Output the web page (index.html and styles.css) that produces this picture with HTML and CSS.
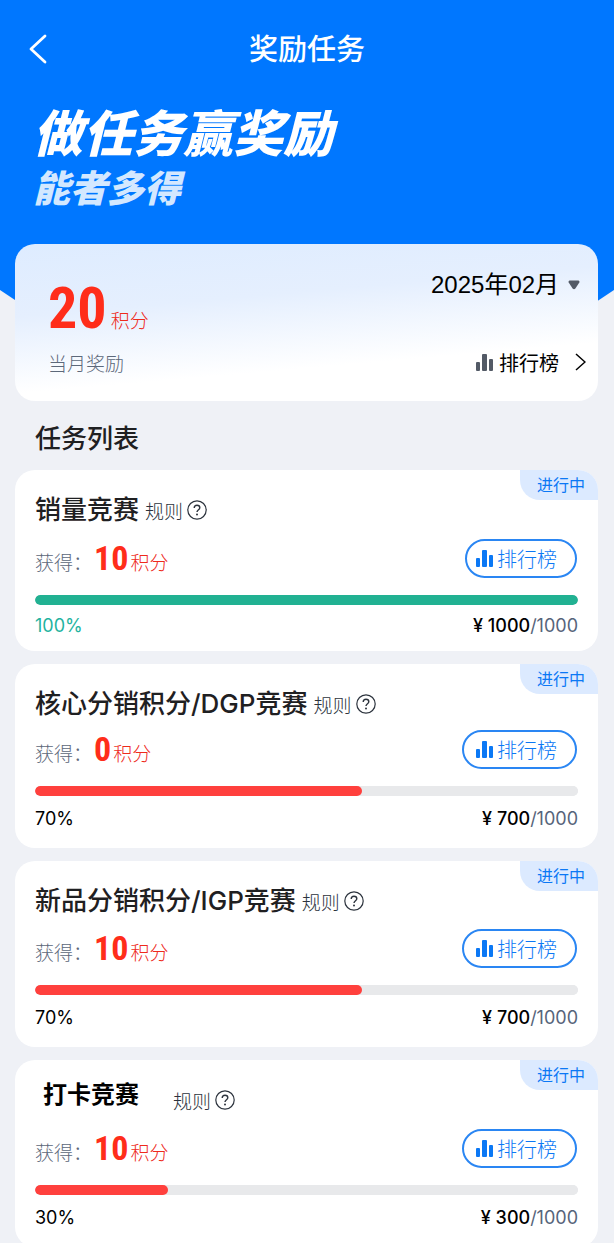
FILE: index.html
```html
<!DOCTYPE html>
<html lang="zh-CN">
<head>
<meta charset="utf-8">
<meta name="viewport" content="width=device-width, initial-scale=1">
<title>奖励任务</title>
<link rel="stylesheet" href="styles.css">
</head>
<body>
<svg class="defs" aria-hidden="true">
  <symbol id="bars" viewBox="0 0 18 17">
    <rect x="0" y="8" width="4" height="9" rx="1"/>
    <rect x="6" y="0" width="5" height="17" rx="1"/>
    <rect x="13" y="5" width="4" height="12" rx="1"/>
  </symbol>
  <symbol id="help" viewBox="0 0 20 20">
    <circle cx="10" cy="10" r="9.2" fill="none" stroke="currentColor" stroke-width="1.2"/>
    <path d="M7.2 8.1C7.2 6.3 8.4 5.2 10 5.2S12.8 6.3 12.8 7.8C12.8 9.7 10 9.8 10 12" fill="none" stroke="currentColor" stroke-width="1.4"/>
    <circle cx="10" cy="14.4" r="1"/>
  </symbol>
</svg>
<div class="page">
  <header class="hero">
    <div class="navbar">
      <button class="back" type="button" aria-label="返回">
        <svg width="18" height="30" viewBox="0 0 18 30"><path d="M16 2L2 15L16 28" fill="none" stroke="currentColor" stroke-width="2.8" stroke-linecap="round" stroke-linejoin="round"/></svg>
      </button>
      <h1 class="nav-title">奖励任务</h1>
    </div>
    <p class="slogan">做任务赢奖励</p>
    <p class="subslogan">能者多得</p>
  </header>
  <main class="content">
    <section class="summary">
      <div class="summary-row">
        <p class="total"><span class="total-num">20</span><span class="unit">积分</span></p>
        <label class="month">
          <select class="month-select" aria-label="月份"><option>2025年02月</option></select>
          <svg width="12" height="10" viewBox="0 0 12 10"><path d="M1.5 .5H10.5Q12 .8 11.3 2.5L7.4 8.4Q6 10 4.6 8.4L.7 2.5Q0 .8 1.5 .5Z"/></svg>
        </label>
      </div>
      <div class="summary-row summary-foot">
        <span class="muted">当月奖励</span>
        <a class="rank-link" href="#rank"><svg class="bars" width="18" height="17"><use href="#bars"/></svg>排行榜<svg class="chevron" width="11" height="18" viewBox="0 0 11 18"><path d="M1 1L10 9L1 17" fill="none" stroke="currentColor" stroke-width="1.5"/></svg></a>
      </div>
    </section>
    <h2 class="list-title">任务列表</h2>

    <article class="task task-done">
      <span class="status">进行中</span>
      <div class="task-head"><h3 class="task-title">销量竞赛</h3><button class="rule" type="button">规则<svg width="20" height="20"><use href="#help"/></svg></button></div>
      <div class="reward"><span class="muted">获得：</span><span class="num">10</span><span class="unit">积分</span><button class="rank" type="button"><svg class="bars" width="18" height="17"><use href="#bars"/></svg>排行榜</button></div>
      <progress class="bar" max="1000" value="1000" aria-label="销量竞赛"></progress>
      <div class="figures"><span class="percent">100%</span><span class="amount"><span class="now">¥ 1000</span>/1000</span></div>
    </article>

    <article class="task task-tight">
      <span class="status">进行中</span>
      <div class="task-head"><h3 class="task-title">核心分销积分/DGP竞赛</h3><button class="rule" type="button">规则<svg width="20" height="20"><use href="#help"/></svg></button></div>
      <div class="reward"><span class="muted">获得：</span><span class="num">0</span><span class="unit">积分</span><button class="rank" type="button"><svg class="bars" width="18" height="17"><use href="#bars"/></svg>排行榜</button></div>
      <progress class="bar" max="1000" value="602" aria-label="核心分销积分/DGP竞赛"></progress>
      <div class="figures"><span class="percent">70%</span><span class="amount"><span class="now">¥ 700</span>/1000</span></div>
    </article>

    <article class="task">
      <span class="status">进行中</span>
      <div class="task-head"><h3 class="task-title">新品分销积分/IGP竞赛</h3><button class="rule" type="button">规则<svg width="20" height="20"><use href="#help"/></svg></button></div>
      <div class="reward"><span class="muted">获得：</span><span class="num">10</span><span class="unit">积分</span><button class="rank" type="button"><svg class="bars" width="18" height="17"><use href="#bars"/></svg>排行榜</button></div>
      <progress class="bar" max="1000" value="602" aria-label="新品分销积分/IGP竞赛"></progress>
      <div class="figures"><span class="percent">70%</span><span class="amount"><span class="now">¥ 700</span>/1000</span></div>
    </article>

    <article class="task task-checkin">
      <span class="status">进行中</span>
      <div class="task-head"><h3 class="task-title">打卡竞赛</h3><button class="rule" type="button">规则<svg width="20" height="20"><use href="#help"/></svg></button></div>
      <div class="reward"><span class="muted">获得：</span><span class="num">10</span><span class="unit">积分</span><button class="rank" type="button"><svg class="bars" width="18" height="17"><use href="#bars"/></svg>排行榜</button></div>
      <progress class="bar" max="1000" value="245" aria-label="打卡竞赛"></progress>
      <div class="figures"><span class="percent">30%</span><span class="amount"><span class="now">¥ 300</span>/1000</span></div>
    </article>
  </main>
</div>
</body>
</html>
```
FILE: styles.css
```css
* { box-sizing: border-box; }
body {
  margin: 0;
  background: #eff1f6;
  color: #000;
  font-family: Inter, "Noto Sans CJK SC", sans-serif;
}
h1, h2, h3, p { margin: 0; }
button, select {
  margin: 0;
  padding: 0;
  border: 0;
  background: none;
  color: inherit;
  font: inherit;
}
svg { display: block; flex: none; fill: currentColor; }
.defs { position: absolute; width: 0; height: 0; }
.page { height: 100vh; overflow-y: auto; scrollbar-width: none; }

.hero {
  padding: 24px 33px 110px;
  background: #0077ff;
  color: #fff;
  clip-path: polygon(0 0, 100% 0, 100% 290px, calc(100% - 30px) 310px, 30px 310px, 0 290px);
}
.navbar {
  display: grid;
  grid-template-columns: 1fr auto 1fr;
  align-items: center;
  height: 50px;
  margin-left: -4px;
  margin-right: -4px;
}
.back { justify-self: start; }
.nav-title { padding-top: 2px; font-size: 29px; line-height: 48px; font-weight: 500; }
.slogan {
  margin-top: 30px;
  font-size: 50px;
  line-height: 60px;
  font-weight: 900;
  font-style: italic;
}
.subslogan {
  font-size: 37px;
  line-height: 50px;
  font-weight: 900;
  font-style: italic;
  color: #d3e8ff;
}

.content { position: relative; margin-top: -80px; padding: 0 16px 0 15px; }
.summary {
  padding: 20px 12px 21px 33px;
  border-radius: 20px;
  background: linear-gradient(175deg, #deecff 0%, #e5effe 35%, #fff 72%);
}
.summary-row { display: flex; justify-content: space-between; }
.total { display: flex; align-items: baseline; gap: 4px; height: 80px; line-height: 88px; }
.total-num, .num {
  font-family: "Roboto Condensed", "Liberation Sans Narrow", "Liberation Sans", sans-serif;
  font-weight: 700;
  color: #ff2d1a;
}
.total-num { font-size: 58px; }
.unit { font-size: 19px; font-weight: 300; color: #ee2a1c; }
.muted { font-size: 19px; font-weight: 300; color: #5c687a; }
.month { display: flex; align-items: center; gap: 8px; height: 42px; padding-right: 6px; color: #535a66; }
.month-select {
  appearance: none;
  font-family: "Liberation Sans", "Noto Sans CJK SC", sans-serif;
  font-size: 24px;
  line-height: 32px;
  color: #000;
}
.summary-foot { align-items: center; height: 36px; }
.rank-link {
  display: flex;
  align-items: center;
  font-size: 20px;
  color: #000;
  text-decoration: none;
}
.rank-link .bars { margin-right: 5px; color: #535a66; }
.chevron { margin-left: 16px; }

.list-title { padding: 20px 20px 13px; font-size: 26px; line-height: 36px; font-weight: 500; color: #1f2022; }

.task {
  position: relative;
  margin-bottom: 13px;
  padding: 23px 20px 17px;
  border-radius: 20px;
  background: #fff;
}
.status {
  position: absolute;
  top: 0;
  right: 0;
  padding: 0 13px 0 17px;
  border-radius: 0 20px 0 20px;
  background: #dceaff;
  color: #0b78f5;
  font-size: 16px;
  line-height: 30px;
}
.task-head { display: flex; align-items: center; gap: 6px; height: 34px; }
.task-title { font-size: 26px; line-height: 34px; font-weight: 500; color: #1f2022; }
.rule { display: flex; align-items: center; gap: 4px; font-size: 19px; font-weight: 300; color: #2c333d; }
.reward { display: flex; align-items: center; height: 39px; margin-top: 11px; }
.reward .muted { width: 59px; margin-top: 6px; white-space: nowrap; }
.num { font-size: 34px; line-height: 39px; }
.reward .unit { margin-top: 6px; margin-left: 2px; }
.rank {
  display: flex;
  align-items: center;
  gap: 3px;
  height: 39px;
  margin-left: auto;
  margin-right: 1px;
  padding: 0 18px 0 12px;
  border: 2px solid #2a86f3;
  border-radius: 20px;
  color: #0b78f5;
  font-size: 20px;
  font-weight: 300;
}
.bar {
  display: block;
  width: 100%;
  height: 10px;
  margin-top: 17px;
  appearance: none;
  border: 0;
  border-radius: 5px;
  background: #e8e9eb;
  overflow: hidden;
}
.bar::-webkit-progress-bar { border-radius: 5px; background: #e8e9eb; }
.bar::-webkit-progress-value { border-radius: 5px; background: #ff403d; }
.figures {
  display: flex;
  justify-content: space-between;
  margin-top: 11px;
  font-size: 18px;
  line-height: 24px;
}
.amount { color: #56647a; }
.now { color: #000; font-weight: 500; }

.task-done { padding-bottom: 13px; }
.task-done .reward, .task-checkin .reward { margin-top: 12px; }
.task-done .bar::-webkit-progress-value { background: #21b192; }
.task-done .figures { margin-top: 9px; }
.task-done .percent { color: #1fb3a0; }
.task-done .rank { padding-left: 9px; }
.task-tight .reward { margin-top: 9px; }
.task-checkin .task-head { gap: 34px; padding-left: 8px; }
.task-checkin .task-title {
  align-self: flex-start;
  font-size: 24px;
  line-height: 24px;
  font-weight: 700;
  color: #000;
}
```
